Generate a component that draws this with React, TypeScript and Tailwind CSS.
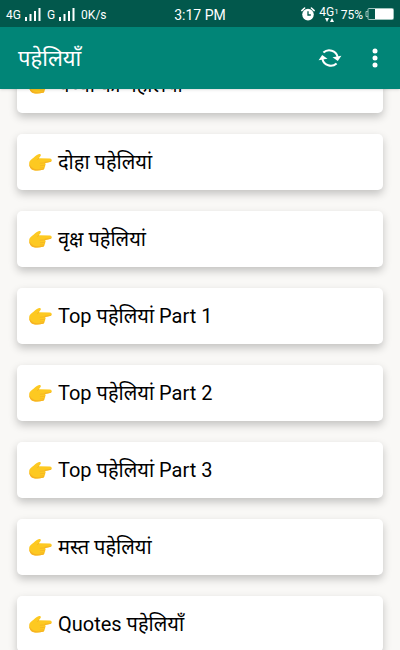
const RIDDLES = [
  'बच्चों की पहेलियां',
  'दोहा पहेलियां',
  'वृक्ष पहेलियां',
  'Top पहेलियां Part 1',
  'Top पहेलियां Part 2',
  'Top पहेलियां Part 3',
  'मस्त पहेलियां',
  'Quotes पहेलियाँ',
];

function SignalBars() {
  return (
    <svg viewBox="0 0 16 13" className="h-[13px] w-4" fill="currentColor" aria-hidden="true">
      <rect x="0" y="9" width="2" height="4" />
      <rect x="4.5" y="6" width="2" height="7" />
      <rect x="9" y="3" width="2" height="10" />
      <rect x="13.5" y="0" width="2" height="13" />
    </svg>
  );
}

function AlarmIcon() {
  return (
    <svg viewBox="0 0 14 14" className="size-3.5" aria-hidden="true">
      <circle cx="7" cy="7.6" r="5.8" fill="#fff" />
      <path d="M.8 3.6 3.6 1M13.2 3.6 10.4 1" stroke="#fff" strokeWidth="1.5" strokeLinecap="round" />
      <path d="M7 4.2V8h2.8" stroke="#02584c" strokeWidth="1.3" fill="none" />
    </svg>
  );
}

function BatteryIcon() {
  return (
    <svg viewBox="0 0 29 12" className="h-3 w-[29px]" aria-hidden="true">
      <path d="M3 3.5H1v5h2" fill="none" stroke="#9fc4bd" />
      <rect x="3" y="0.5" width="25.5" height="11" rx="1" fill="none" stroke="#9fc4bd" />
      <rect x="10" y="1" width="18" height="10" fill="#fff" />
    </svg>
  );
}

function SyncIcon() {
  return (
    <svg viewBox="0 0 24 20" className="h-5 w-6" fill="none" stroke="#fff" strokeWidth="2" aria-hidden="true">
      <path d="M5.4 4.600A8.600 8.600 0 0 1 19.600 9" />
      <path d="M18.600 15.400A8.600 8.600 0 0 1 4.400 11" />
      <path d="M14.500 9.200 23.400 7.800 19.800 13z" fill="#fff" stroke="none" />
      <path d="M9.500 10.800.6 12.200 4.200 7z" fill="#fff" stroke="none" />
    </svg>
  );
}

function HandIcon() {
  return (
    <svg viewBox="0 0 24 19" className="h-[19px] w-6 shrink-0" aria-hidden="true">
      <path
        d="M1.200 9.800C1.400 7.400 3.600 6 5.800 4.400 7.600 3.100 9.400 1.400 11.200 1.100c1.500-.2 2.100 1.100 1.200 2.100L10.800 5.200l11.200.3c2.200.2 2.200 3.200 0 3.500l-5 .9c.8.7.8 1.900 0 2.500.4.900.1 1.900-.7 2.300.1 1-.5 1.900-1.600 2.100-2.600.7-6.200 1-8.800.4C2.700 16.600 1 13.800 1.200 9.800z"
        fill="#fdc921"
      />
      <path
        d="M1.200 10.400C1.200 13.900 2.800 16.600 5.900 17.200c2.600.6 6.200.3 8.800-.4 1.100-.2 1.700-1.100 1.600-2.100-.9.900-2.400 1.300-4.400 1.500C6.800 16.600 3.200 15.400 1.200 10.400z"
        fill="#f6b222"
      />
      <path
        d="M10.800 5.200 9.400 6.800M16.800 9.900l-4.600.3M16.800 12.400l-4.400.3M16 14.700l-3.800.3"
        stroke="#f3b023"
        strokeWidth="0.700"
        strokeLinecap="round"
        fill="none"
      />
      <path d="M16.800 9.900l5.200-.9c1.100-.2 1.700-1 1.700-1.800-.5.600-1.100.9-1.900 1l-5 .5z" fill="#f6b222" />
    </svg>
  );
}

function StatusBar() {
  return (
    <div className="grid h-[27px] grid-cols-[1fr_auto_1fr] items-center bg-[#02584c] text-xs text-white">
      <div className="flex items-center gap-1 pl-1.5 pt-0.5">
        <span>4G</span>
        <SignalBars />
        <span className="pl-0.5">G</span>
        <SignalBars />
        <span className="pl-0.5">0K/s</span>
      </div>
      <time className="pt-0.5 text-sm">3:17 PM</time>
      <div className="flex items-center justify-end gap-0.5 pr-1.5">
        <AlarmIcon />
        <div className="flex flex-col items-center pl-0.5">
          <span className="flex leading-3">
            4G<span className="text-[8px]">1</span>
          </span>
          <svg viewBox="0 0 9 4" className="h-1 w-[9px]" fill="currentColor" aria-hidden="true">
            <path d="M0 0h4L2 4zM5 4h4L7 0z" />
          </svg>
        </div>
        <span className="pt-0.5">75%</span>
        <BatteryIcon />
      </div>
    </div>
  );
}

export default function App() {
  return (
    <div className="flex h-screen flex-col overflow-hidden bg-[#f9f8f6] font-[Roboto,'Noto_Sans',sans-serif]">
      <header className="z-10 shrink-0 shadow-sm">
        <StatusBar />
        <div className="flex h-[62px] items-center bg-[#018577] pl-[18px] pr-3 text-white">
          <h1 className="flex-1 text-[22px] font-normal">पहेलियाँ</h1>
          <button type="button" aria-label="Refresh" className="px-3 py-2">
            <SyncIcon />
          </button>
          <button type="button" aria-label="More options" className="ml-2 px-2.5 py-2">
            <svg viewBox="0 0 6 20" className="h-5 w-1.5" fill="currentColor" aria-hidden="true">
              <circle cx="3" cy="3" r="2.500" />
              <circle cx="3" cy="10" r="2.500" />
              <circle cx="3" cy="17" r="2.500" />
            </svg>
          </button>
        </div>
      </header>

      <main className="min-h-0 flex-1 overflow-hidden">
        {/* list is scrolled part way, first row sits under the toolbar */}
        <ul className="-mt-8 flex flex-col gap-[21px] px-[17px]">
          {RIDDLES.map((title) => (
            <li key={title}>
              <button
                type="button"
                className="flex h-14 w-full items-center gap-1.5 rounded-[5px] bg-white px-[11px] text-left text-xl text-black shadow-[0_4px_8px_rgba(0,0,0,0.22)]"
              >
                <HandIcon />
                <span>{title}</span>
              </button>
            </li>
          ))}
        </ul>
      </main>
    </div>
  );
}
